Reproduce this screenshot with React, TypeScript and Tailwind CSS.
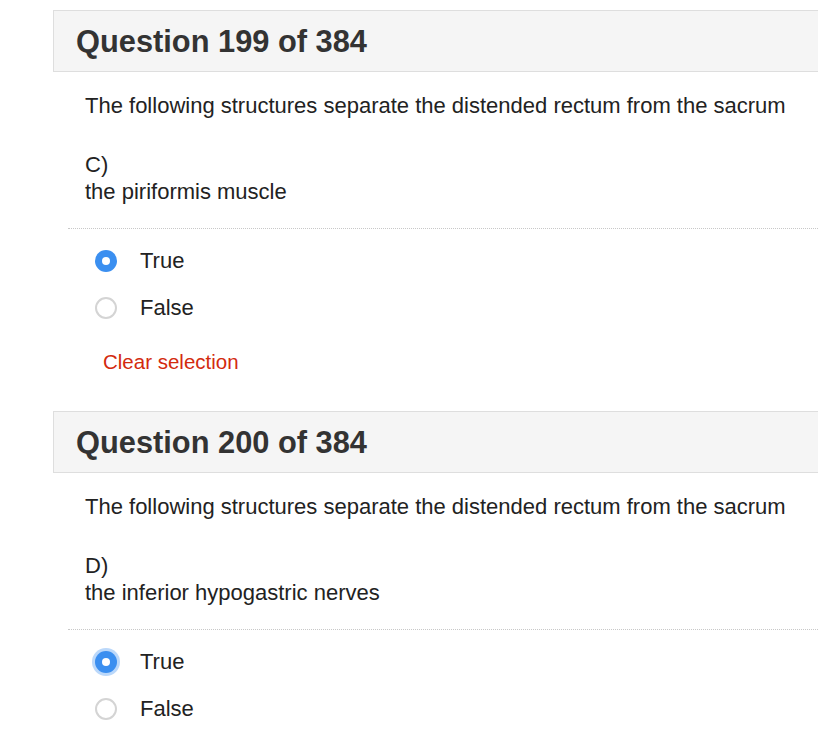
import React from 'react';

interface QuestionProps {
  number: number;
  total: number;
  stem: string;
  letter: string;
  option: string;
  selected: 'true' | 'false' | null;
  focused?: boolean;
}

const Radio = ({ checked, focused }: { checked: boolean; focused?: boolean }) => {
  if (checked) {
    return (
      <span
        className={`flex h-[22px] w-[22px] shrink-0 items-center justify-center rounded-full bg-[#3b8ff0] ${
          focused ? 'shadow-[0_0_0_3px_rgba(59,143,240,0.35)]' : ''
        }`}
      >
        <span className="h-[8px] w-[8px] rounded-full bg-white" />
      </span>
    );
  }
  return <span className="h-[22px] w-[22px] shrink-0 rounded-full border-2 border-[#d4d4d4] bg-white" />;
};

const Question: React.FC<QuestionProps> = ({ number, total, stem, letter, option, selected, focused }) => {
  return (
    <div className="mb-[36px]">
      <div className="flex h-[62px] w-[800px] items-center border border-[#dedede] bg-[#f5f5f5] pl-[22px] pt-[3px]">
        <h2 className="text-[30.8px] font-bold text-[#333333]">
          Question {number} of {total}
        </h2>
      </div>

      <p className="mt-[20px] pl-[32px] text-[22px] leading-[27px] text-[#222222]">{stem}</p>

      <div className="mt-[32px] pl-[32px] text-[22px] leading-[27px] text-[#222222]">
        <div>{letter})</div>
        <div>{option}</div>
      </div>

      <div className="ml-[15px] mt-[23px] border-t border-dotted border-[#c8c8c8]" />

      <div className="mt-[18px] flex flex-col gap-[20px] pl-[42px] text-[22px] leading-[27px] text-[#222222]">
        <label className="flex items-center gap-[23px]">
          <Radio checked={selected === 'true'} focused={focused} />
          <span>True</span>
        </label>
        <label className="flex items-center gap-[23px]">
          <Radio checked={selected === 'false'} />
          <span>False</span>
        </label>
      </div>

      <button className="ml-[50px] mt-[27px] block text-[20.5px] leading-[27px] text-[#d32a0e]">
        Clear selection
      </button>
    </div>
  );
};

export default function App() {
  const stem = 'The following structures separate the distended rectum from the sacrum';
  return (
    <div className="h-[740px] w-[818px] overflow-hidden bg-white font-['Liberation_Sans',Arial,sans-serif]">
      <div className="pl-[53px] pt-[10px]">
        <Question number={199} total={384} stem={stem} letter="C" option="the piriformis muscle" selected="true" />
        <Question
          number={200}
          total={384}
          stem={stem}
          letter="D"
          option="the inferior hypogastric nerves"
          selected="true"
          focused
        />
      </div>
    </div>
  );
}
